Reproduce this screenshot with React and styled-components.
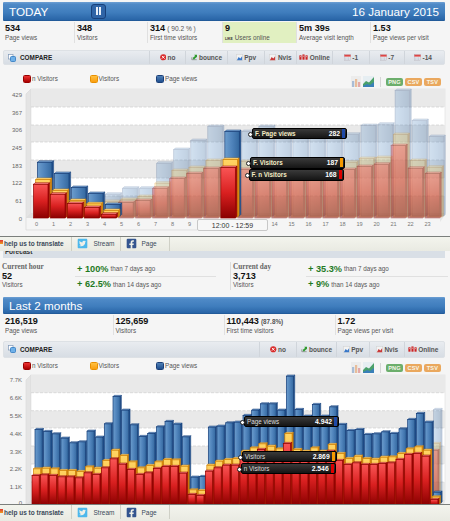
import React from "react";
import styled, { createGlobalStyle } from "styled-components";
import { FaTwitterSquare, FaFacebookSquare } from "react-icons/fa";

const GlobalStyle = createGlobalStyle`
  html, body { margin: 0; padding: 0; background: #f5f5f5; }
  body { font-family: "Liberation Sans", Arial, sans-serif; color: #222; }
`;

const Page = styled.div`
  width: 450px;
  height: 521px;
  overflow: hidden;
  padding-top: 1.5px;
  box-sizing: border-box;
`;

const TitleBar = styled.div`
  height: ${(p) => p.$h}px;
  margin: ${(p) => p.$mt || 0}px 5px 0 3px;
  padding: 0 6px;
  display: flex;
  align-items: center;
  justify-content: space-between;
  box-sizing: border-box;
  color: #fff;
  font-size: 11.7px;
  background: linear-gradient(#6d9fd3 0, #4f8ac7 12%, #3f7dbd 55%, #2a66a8 92%, #1d5592 100%);
  border-radius: 1px;
`;

const TitleLeft = styled.div`
  display: flex;
  align-items: center;
  gap: 43px;
`;

const PauseButton = styled.div`
  width: 14.5px;
  height: 14.5px;
  box-sizing: border-box;
  display: flex;
  gap: 1.5px;
  align-items: center;
  justify-content: center;
  border: 1px solid #17407a;
  border-radius: 3px;
  background: #2f64a6;
  i {
    width: 2.2px;
    height: 8px;
    background: #e8eff8;
  }
`;

const StatsRow = styled.div`
  display: grid;
  grid-template-columns: ${(p) => p.$cols};
  height: ${(p) => p.$h}px;
  margin: 1px 5px 0 3px;
`;

const Stat = styled.div`
  box-sizing: border-box;
  padding: 1px 2px 0 2px;
  border-right: 1px solid #e0e0e0;
  background: ${(p) => (p.$green ? "#e1f0c1" : "transparent")};
  &:last-child { border-right: 0; }
`;

const StatValue = styled.div`
  font-size: 9.1px;
  line-height: 11px;
  font-weight: bold;
  color: #111;
  small {
    font-size: 6.6px;
    font-weight: normal;
    color: #555;
    margin-left: 2px;
  }
  b {
    font-size: 6.4px;
    color: #555;
    margin-left: 2px;
  }
`;

const StatLabel = styled.div`
  font-size: 6.3px;
  line-height: 8px;
  color: #555;
  white-space: nowrap;
`;

const LikeTag = styled.span`
  font-size: 3.4px;
  font-weight: bold;
  color: #333;
  margin-right: 2px;
`;

const CompareBar = styled.div`
  height: ${(p) => p.$h}px;
  margin: ${(p) => p.$mt}px 5px 0 3px;
  display: flex;
  align-items: center;
  box-sizing: border-box;
  padding-right: 3px;
  border: 1px solid #dde1e5;
  border-radius: 2px;
  background: linear-gradient(#e9ecf0, #d7dde4);
`;

const CompareTitle = styled.div`
  flex: 1;
  display: flex;
  align-items: center;
  gap: 4px;
  padding-left: 4px;
  font-size: 6.4px;
  font-weight: bold;
  color: #222;
`;

const CompareButton = styled.div`
  width: ${(p) => p.$w}px;
  height: 100%;
  box-sizing: border-box;
  display: flex;
  align-items: center;
  justify-content: center;
  gap: 1.5px;
  border-left: 1px solid #d0d5db;
  font-size: 6.5px;
  font-weight: bold;
  color: #555;
  white-space: nowrap;
`;

const ChartHead = styled.div`
  height: ${(p) => p.$h}px;
  padding: ${(p) => p.$pad}px 9px 0 23px;
  box-sizing: border-box;
  display: flex;
  justify-content: space-between;
  align-items: flex-start;
`;

const Legend = styled.div`
  display: flex;
`;

const LegendItem = styled.div`
  width: 66.5px;
  display: flex;
  align-items: center;
  gap: 1px;
  font-size: 6.3px;
  line-height: 8px;
  color: #555;
`;

const Swatch = styled.i`
  width: 8px;
  height: 8px;
  border-radius: 1.5px;
  border: 0.5px solid ${(p) => p.$line};
  box-sizing: border-box;
  background: ${(p) => p.$fill};
`;

const Tools = styled.div`
  display: flex;
  align-items: center;
  gap: 2px;
  margin-top: ${(p) => p.$mt || 0}px;
`;

const ToolDivider = styled.i`
  width: 1px;
  height: 10px;
  margin: 0 3px 0 4px;
  background: #d5d5d5;
`;

const ExportBadge = styled.span`
  width: 17px;
  height: 8px;
  border-radius: 2px;
  display: flex;
  align-items: center;
  justify-content: center;
  font-size: 5.6px;
  font-weight: bold;
  letter-spacing: 0.2px;
  color: #f7f7ea;
  background: ${(p) => p.$color};
`;

const Plot = styled.div`
  position: relative;
  height: ${(p) => p.$h}px;
  svg { display: block; }
`;

const Tip = styled.div`
  position: absolute;
  left: ${(p) => p.$x}px;
  top: ${(p) => p.$y}px;
  width: 95px;
  height: 11.5px;
  box-sizing: border-box;
  padding: 0 1px 0 2px;
  display: flex;
  align-items: center;
  border-radius: 2px;
  background: linear-gradient(#3a3a3a, #151515);
  border: 0.5px solid #000;
  color: ${(p) => (p.$strong ? "#f4ecc4" : "#ddd")};
  font-size: 6.3px;
  font-weight: ${(p) => (p.$strong ? "bold" : "normal")};
  &::before {
    content: "";
    position: absolute;
    left: -5px;
    top: 3px;
    width: 3px;
    height: 3px;
    border-radius: 50%;
    background: #fff;
    border: 1px solid #222;
  }
`;

const TipLabel = styled.span`
  flex: 1;
  white-space: nowrap;
`;

const TipValue = styled.b`
  font-size: 6.8px;
  color: #fff;
  margin-right: 2px;
`;

const TipMark = styled.i`
  width: 3px;
  height: 9px;
  background: ${(p) => p.$color};
`;

const Footer = styled.div`
  height: ${(p) => p.$h}px;
  box-sizing: border-box;
  position: relative;
  display: flex;
  border-top: 1.5px solid #7b7f7c;
  background: linear-gradient(#f3f4ed, #e9eae2);
  font-size: 6.5px;
  color: #3a4a5a;
`;

const FooterItem = styled.div`
  width: ${(p) => p.$w}px;
  height: 14px;
  box-sizing: border-box;
  display: flex;
  align-items: center;
  gap: ${(p) => p.$gap || 0}px;
  padding-left: ${(p) => p.$pad || 0}px;
  border-right: 1px solid #cfd0c6;
  font-weight: ${(p) => (p.$strong ? "bold" : "normal")};
  white-space: nowrap;
`;

const FlagCrumb = styled.i`
  width: 2.5px;
  height: 4px;
  margin-right: 1.5px;
  margin-top: -3px;
  background: linear-gradient(#d33, #f0a020);
`;

const ForecastStrip = styled.div`
  height: 7px;
  margin: 0 5px 0 3px;
  padding-left: 2px;
  overflow: hidden;
  background: #d9dfe6;
  font-size: 6.6px;
  font-weight: bold;
  line-height: 7px;
  color: #333;
  span {
    display: block;
    margin-top: -3.5px;
  }
`;

const ForecastRow = styled.div`
  display: grid;
  grid-template-columns: 230px 220px;
  height: 39px;
`;

const ForecastBlock = styled.div`
  display: grid;
  grid-template-columns: ${(p) => p.$cols};
  padding-top: 4px;
  box-sizing: border-box;
  position: relative;
`;

const ForecastInfo = styled.div`
  padding: 1px 0 0 ${(p) => p.$pad}px;
  ${(p) => p.$rule && "border-left: 1px solid #dcdcdc; margin: 0 0 7px 0;"}
`;

const InfoTitle = styled.div`
  font-family: "Liberation Serif", "Times New Roman", serif;
  font-size: 7.2px;
  font-weight: bold;
  line-height: 8px;
  color: #666;
`;

const InfoValue = styled.div`
  font-size: 9.1px;
  font-weight: bold;
  line-height: 10px;
  color: #111;
`;

const Changes = styled.div`
  display: flex;
  flex-direction: column;
  margin-right: ${(p) => p.$mr}px;
`;

const ChangeRow = styled.div`
  height: ${(p) => p.$h}px;
  display: flex;
  align-items: center;
  gap: 2px;
  padding-left: 2px;
  font-size: 6.3px;
  color: #555;
  white-space: nowrap;
  &:first-child { border-bottom: 1px solid #e0e0e0; }
`;

const Gain = styled.b`
  font-size: 9.2px;
  color: #1f7a1f;
`;

// page icons
const CompareIcon = () => (
  <svg width="8" height="8" viewBox="0 0 8 8">
    <rect x="0.5" y="0.5" width="4.5" height="4.5" fill="#fff" stroke="#7f98b8" strokeWidth="0.7" />
    <rect x="2.5" y="2.5" width="5" height="5" rx="1" fill="#6fb0e8" stroke="#2d78c0" strokeWidth="0.8" />
  </svg>
);

const NoIcon = () => (
  <svg width="6.5" height="6.5" viewBox="0 0 8 8">
    <circle cx="4" cy="4" r="3.8" fill="#d92b2b" />
    <path d="M2.3 2.3l3.4 3.4M5.7 2.3L2.3 5.7" stroke="#fff" strokeWidth="1.1" />
  </svg>
);

const BounceIcon = () => (
  <svg width="6.5" height="6.5" viewBox="0 0 8 8">
    <path d="M1 4V7H7" fill="none" stroke="#666" strokeWidth="0.7" />
    <path d="M2 5L5 2.5 4 1H8V5L6.8 3.8 3.5 7Z" fill="#2f9a2f" />
  </svg>
);

const TrendIcon = ({ color }) => (
  <svg width="7" height="7" viewBox="0 0 8 8">
    <rect x="0.3" y="0.3" width="7.4" height="7.4" rx="1" fill="#f2f2f2" stroke="#bbb" strokeWidth="0.5" />
    <path d="M1 7L3 3.5 5 5 7 2.5V7Z" fill={color} />
  </svg>
);

const OnlineIcon = () => (
  <svg width="9" height="7" viewBox="0 0 10 8">
    <rect x="0.3" y="1.5" width="2.4" height="5" fill="#c22" />
    <rect x="3.8" y="0.5" width="2.4" height="6" fill="#c22" />
    <rect x="7.3" y="1.5" width="2.4" height="5" fill="#c22" />
    <path d="M1 3h1M4.5 2.5h1M8 3h1" stroke="#fff" strokeWidth="0.7" />
  </svg>
);

const CalendarIcon = () => (
  <svg width="7" height="7" viewBox="0 0 8 8">
    <rect x="0.4" y="0.8" width="7.2" height="6.8" fill="#f4f4f4" stroke="#a9a9b5" strokeWidth="0.5" />
    <rect x="0.4" y="0.8" width="7.2" height="2.2" fill="#d44" />
    <path d="M1.5 4.5h5M1.5 6h5" stroke="#8b9bb8" strokeWidth="0.8" strokeDasharray="1 0.5" />
  </svg>
);

const ColumnsTool = () => (
  <svg width="10" height="11" viewBox="0 0 10 11">
    <rect width="10" height="11" fill="#ececec" />
    <rect x="1" y="5" width="2.2" height="6" fill="#a9bdd6" />
    <rect x="4" y="3" width="2.2" height="8" fill="#e8bd9a" />
    <rect x="7" y="6" width="2.2" height="5" fill="#e3a9a9" />
  </svg>
);

const AreaTool = () => (
  <svg width="11" height="11" viewBox="0 0 11 11">
    <rect width="11" height="11" fill="#e6eef2" />
    <path d="M0 8L3 5 6 6.5 11 1V11H0Z" fill="#4aa06a" />
    <path d="M0 10L4 8 7 9 11 6V11H0Z" fill="#3a80b8" />
  </svg>
);

// chart
const palette = {
  blue: { fill: "blue", line: "#133c78", top: "#7ba3cf", side: "#2a5c96" },
  orange: { fill: "orange", line: "#d68300", top: "#ffe08a", side: "#d98a10" },
  red: { fill: "red", line: "#8f0000", top: "#ff8a8a", side: "#a00808" },
};

const Bar = ({ x, w, h, floor, d, kind, id }) => {
  if (!h) return null;
  const c = palette[kind];
  const top = floor - h;
  return (
    <g>
      <polygon
        points={`${x},${top + d} ${x + d},${top} ${x + w + d},${top} ${x + w},${top + d}`}
        fill={c.top}
        stroke={c.line}
        strokeWidth="0.5"
      />
      <polygon
        points={`${x + w},${top + d} ${x + w + d},${top} ${x + w + d},${floor - d} ${x + w},${floor}`}
        fill={c.side}
        stroke={c.line}
        strokeWidth="0.5"
      />
      <rect x={x} y={top + d} width={w} height={h - d} fill={`url(#${id}-${c.fill})`} stroke={c.line} strokeWidth="0.7" />
    </g>
  );
};

const Series = ({ data, conf, id, fade }) => (
  <g>
    {[
      ["blue", conf.blueOff, 2],
      ["orange", conf.orangeOff, 1],
      ["red", 0, 0],
    ].map(([kind, off, lift]) => (
      <g key={kind} opacity={fade ? fade[kind] : 1}>
        {data[kind].map((h, i) => (
          <Bar
            key={i}
            id={id}
            kind={kind}
            x={conf.startX + conf.step * i + off}
            w={conf.barW}
            h={h ? Math.max(h - lift, 0) : 0}
            floor={conf.floor - lift}
            d={conf.depth}
          />
        ))}
      </g>
    ))}
  </g>
);

const ghostFade = { blue: 0.3, orange: 0.32, red: 0.42 };

const Chart = ({ id, conf, solid, ghost, children }) => {
  const { y0, height, wallTop, floor, grid, yLabels, xLabels } = conf;
  const back = floor - 5;
  return (
    <Plot $h={height}>
      <svg width="450" height={height} viewBox={`0 ${y0} 450 ${height}`}>
        <defs>
          <linearGradient id={`${id}-blue`} x1="0" x2="1" y1="0" y2="0">
            <stop offset="0" stopColor="#6c9dcd" />
            <stop offset="0.5" stopColor="#4f83bb" />
            <stop offset="1" stopColor="#34689f" />
          </linearGradient>
          <linearGradient id={`${id}-orange`} x1="0" x2="0" y1="0" y2="1">
            <stop offset="0" stopColor="#ffd463" />
            <stop offset="1" stopColor="#f8ae2a" />
          </linearGradient>
          <linearGradient id={`${id}-red`} x1="0" x2="0" y1="0" y2="1">
            <stop offset="0" stopColor="#f95555" />
            <stop offset="0.5" stopColor="#d92020" />
            <stop offset="1" stopColor="#8a0000" />
          </linearGradient>
        </defs>

        <polygon points={`26,${wallTop + 5} 31,${wallTop} 31,${back} 26,${floor}`} fill="#e4e4e4" stroke="#d8d8d8" strokeWidth="0.6" />
        <rect x="31" y={wallTop} width="414" height={back - wallTop} fill="#fff" stroke="#dcdcdc" strokeWidth="0.6" />
        {grid.map((y, i) =>
          i % 2 === 0 ? (
            <rect key={y} x="31" y={y} width="414" height={(grid[i + 1] || back) - y} fill="#e9e9e9" />
          ) : null
        )}
        {grid.slice(1).map((y) => (
          <line key={y} x1="31" x2="445" y1={y} y2={y} stroke="#cfcfcf" strokeWidth="0.7" strokeDasharray="3 1.5" />
        ))}
        <polygon points={`26,${floor} 31,${back} 445,${back} 440,${floor}`} fill="#dedede" />
        <polygon points={`440,${floor} 445,${back} 445,${back + 2} 440,${floor + 4}`} fill="#e6e6e6" />

        {yLabels.map(([text, y]) => (
          <text key={text} x="22" y={y + 2} textAnchor="end" fontSize="6" fill="#666" fontFamily="Liberation Sans">
            {text}
          </text>
        ))}

        {ghost && <Series data={ghost} conf={conf} id={id} fade={ghostFade} />}
        <Series data={solid} conf={conf} id={id} />

        {xLabels && (
          <g>
            <path d={`M26 ${floor}V230H197`} fill="none" stroke="#d8d8d8" strokeWidth="0.7" />
            {xLabels.map(([text, x]) => (
              <text key={text} x={x} y="226" textAnchor="middle" fontSize="5.6" fill="#777" fontFamily="Liberation Sans">
                {text}
              </text>
            ))}
            <rect x="197.5" y="219.5" width="70" height="11" rx="1.5" fill="#f7f7f7" stroke="#b5b5b5" strokeWidth="0.7" />
            <text x="232.5" y="227.5" textAnchor="middle" fontSize="7" fill="#333" fontFamily="Liberation Sans">
              12:00 - 12:59
            </text>
          </g>
        )}
      </svg>
      {children}
    </Plot>
  );
};

const blank = (n) => Array(n).fill(0);

const todayConf = {
  y0: 87,
  height: 148.5,
  wallTop: 89,
  floor: 218,
  grid: [89, 107, 125, 142, 160, 178, 196],
  startX: 33.5,
  step: 17.03,
  barW: 14.5,
  depth: 1.6,
  blueOff: 4,
  orangeOff: 2.2,
  yLabels: [["429", 95], ["367", 113], ["306", 130], ["245", 148], ["183", 166], ["122", 183], ["61", 201], ["0", 218.5]],
  xLabels: [0, 1, 2, 3, 4, 5, 6, 7, 8, 9, 14, 15, 16, 17, 18, 19, 20, 21, 22, 23].map((n) => [String(n), 36.6 + 17 * n]),
};

const todaySolid = {
  red: [35.3, 25.3, 16, 12, 5.3, ...blank(6), 52, ...blank(12)],
  orange: [40, 29, 19, 15.7, 9, ...blank(6), 60, ...blank(12)],
  blue: [57.3, 46, 32, 26, 15, ...blank(6), 88, ...blank(12)],
};

const todayGhost = {
  red: [...blank(5), 17, 19, 31.3, 41, 46, 51, 0, 50, 50, 50, 50, 50, 50, 50, 53, 55.3, 74, 51.3, 46],
  orange: [...blank(4), 18, 20, 23, 36.3, 49, 52, 59, 0, 58, 58, 58, 58, 58, 58, 57.3, 61, 62, 85, 59, 52.3],
  blue: [...blank(4), 25.3, 31.3, 31.3, 56.3, 70, 79, 93, 0, 88, 93, 88, 88, 88, 88, 85.3, 94, 95.3, 129, 99, 83],
};

const monthsConf = {
  y0: 370,
  height: 134.5,
  wallTop: 375,
  floor: 505,
  grid: [375, 392.7, 410.7, 428, 446, 464, 482],
  startX: 32,
  step: 8.667,
  barW: 7.2,
  depth: 1.2,
  blueOff: 3,
  orangeOff: 1.5,
  yLabels: [["7.7K", 380], ["6.6K", 398], ["5.5K", 416], ["4.4K", 434], ["3.3K", 451.7], ["2.2K", 469], ["1.1K", 487], ["0", 503]],
};

// tops as read off the graph, in thirds of a pixel below y 365
const toHeight = (tops) => tops.map((t) => 140 - t / 3);

const monthsSolid = {
  red: toHeight([
    328, 326, 328, 332, 332, 335, 320, 325, 305, 278, 294, 310, 325, 320, 307, 301, 301, 321, 385, 388, 315, 305,
    297, 297, 272, 262, 250, 258, 265, 232, 268, 272, 262, 272, 255, 283, 295, 290, 295, 295, 292, 290, 280, 265, 262, 270, 400,
  ]),
  orange: toHeight([
    308, 306, 308, 313, 313, 316, 302, 306, 283, 252, 268, 287, 305, 298, 287, 280, 281, 300, 371, 373, 297, 285,
    280, 277, 255, 245, 233, 240, 248, 202, 250, 255, 245, 255, 235, 262, 277, 270, 277, 279, 273, 272, 262, 248, 242, 252, 392,
  ]),
  blue: toHeight([
    190, 196, 203, 216, 230, 227, 195, 213, 173, 91, 132, 176, 211, 202, 182, 166, 174, 212, 333, 331, 183, 180,
    170, 168, 148, 132, 113, 113, 132, 30, 130, 150, 115, 150, 122, 175, 193, 190, 205, 203, 197, 202, 188, 160, 142, 168, 378,
  ]),
};

const monthsGhost = {
  red: [...blank(46), 140 - 253 / 3],
  orange: [...blank(46), 140 - 232 / 3],
  blue: [...blank(46), 140 - 130 / 3],
};

const compareToday = [
  { w: 36, icon: <NoIcon />, text: "no" },
  { w: 42, icon: <BounceIcon />, text: "bounce" },
  { w: 37, icon: <TrendIcon color="#3a78c8" />, text: "Ppv" },
  { w: 32, icon: <TrendIcon color="#c83a3a" />, text: "Nvis" },
  { w: 36, icon: <OnlineIcon />, text: "Online" },
  { w: 37, icon: <CalendarIcon />, text: "-1" },
  { w: 35, icon: <CalendarIcon />, text: "-7" },
  { w: 37, icon: <CalendarIcon />, text: "-14" },
];

const compareMonths = [
  { w: 37, icon: <NoIcon />, text: "no" },
  { w: 40, icon: <BounceIcon />, text: "bounce" },
  { w: 33, icon: <TrendIcon color="#3a78c8" />, text: "Ppv" },
  { w: 35, icon: <TrendIcon color="#c83a3a" />, text: "Nvis" },
  { w: 37, icon: <OnlineIcon />, text: "Online" },
];

const Compare = ({ items, h, mt }) => (
  <CompareBar $h={h} $mt={mt}>
    <CompareTitle>
      <CompareIcon />
      COMPARE
    </CompareTitle>
    {items.map((b) => (
      <CompareButton key={b.text} $w={b.w}>
        {b.icon}
        {b.text}
      </CompareButton>
    ))}
  </CompareBar>
);

const Head = ({ h, pad, toolsUp }) => (
  <ChartHead $h={h} $pad={pad}>
    <Legend>
      <LegendItem>
        <Swatch $fill="linear-gradient(#ee3333,#a80000)" $line="#900" />n Visitors
      </LegendItem>
      <LegendItem>
        <Swatch $fill="linear-gradient(#ffc040,#fa9e10)" $line="#e89000" />Visitors
      </LegendItem>
      <LegendItem>
        <Swatch $fill="linear-gradient(#4f7fb5,#1f4f8f)" $line="#1b3f78" />Page views
      </LegendItem>
    </Legend>
    <Tools $mt={toolsUp}>
      <ColumnsTool />
      <AreaTool />
      <ToolDivider />
      <ExportBadge $color="#6cae6c">PNG</ExportBadge>
      <ExportBadge $color="#eaa85e">CSV</ExportBadge>
      <ExportBadge $color="#eaa85e">TSV</ExportBadge>
    </Tools>
  </ChartHead>
);

const BottomBar = ({ h }) => (
  <Footer $h={h}>
    <FooterItem $w={71.5} $strong>
      <FlagCrumb />
      help us to translate
    </FooterItem>
    <FooterItem $w={49} $pad={5} $gap={6}>
      <FaTwitterSquare size={11} color="#4db8ec" />
      Stream
    </FooterItem>
    <FooterItem $w={49} $pad={5} $gap={5}>
      <FaFacebookSquare size={11} color="#34558f" />
      Page
    </FooterItem>
  </Footer>
);

const TipRow = ({ x, y, label, value, color, strong }) => (
  <Tip $x={x} $y={y} $strong={strong}>
    <TipLabel>{label}</TipLabel>
    <TipValue>{value}</TipValue>
    <TipMark $color={color} />
  </Tip>
);

export default function App() {
  return (
    <>
      <GlobalStyle />
      <Page>
        <TitleBar $h={19.5}>
          <TitleLeft>
            TODAY
            <PauseButton>
              <i />
              <i />
            </PauseButton>
          </TitleLeft>
          <span>16 January 2015</span>
        </TitleBar>
        <StatsRow $cols="72px 73px 75px 74px 74px 74px" $h={21}>
          <Stat>
            <StatValue>534</StatValue>
            <StatLabel>Page views</StatLabel>
          </Stat>
          <Stat>
            <StatValue>348</StatValue>
            <StatLabel>Visitors</StatLabel>
          </Stat>
          <Stat>
            <StatValue>
              314<small>( 90.2 % )</small>
            </StatValue>
            <StatLabel>First time visitors</StatLabel>
          </Stat>
          <Stat $green>
            <StatValue>9</StatValue>
            <StatLabel>
              <LikeTag>LIKE</LikeTag>Users online
            </StatLabel>
          </Stat>
          <Stat>
            <StatValue>5m 39s</StatValue>
            <StatLabel>Average visit length</StatLabel>
          </Stat>
          <Stat>
            <StatValue>1.53</StatValue>
            <StatLabel>Page views per visit</StatLabel>
          </Stat>
        </StatsRow>
        <Compare items={compareToday} h={15} mt={7} />
        <Head h={22} pad={10} toolsUp={1} />
        <Chart id="today" conf={todayConf} solid={todaySolid} ghost={todayGhost}>
          <TipRow x={252} y={40.5} label="F. Page views" value="282" color="#1f4aa8" strong />
          <TipRow x={250} y={70} label="F. Visitors" value="187" color="#f59a00" strong />
          <TipRow x={248.5} y={82} label="F. n Visitors" value="168" color="#d00" strong />
        </Chart>
        <BottomBar h={15.5} />

        <ForecastStrip>
          <span>Forecast</span>
        </ForecastStrip>
        <ForecastRow>
          <ForecastBlock $cols="75px 1fr">
            <ForecastInfo $pad={2}>
              <InfoTitle>Current hour</InfoTitle>
              <InfoValue>52</InfoValue>
              <StatLabel>Visitors</StatLabel>
            </ForecastInfo>
            <Changes $mr={14}>
              <ChangeRow $h={13.5}>
                <Gain>+ 100%</Gain> than 7 days ago
              </ChangeRow>
              <ChangeRow $h={15}>
                <Gain>+ 62.5%</Gain> than 14 days ago
              </ChangeRow>
            </Changes>
          </ForecastBlock>
          <ForecastBlock $cols="76px 1fr">
            <ForecastInfo $pad={2} $rule>
              <InfoTitle>Current day</InfoTitle>
              <InfoValue>3,713</InfoValue>
              <StatLabel>Visitors</StatLabel>
            </ForecastInfo>
            <Changes $mr={2}>
              <ChangeRow $h={13.5}>
                <Gain>+ 35.3%</Gain> than 7 days ago
              </ChangeRow>
              <ChangeRow $h={15}>
                <Gain>+ 9%</Gain> than 14 days ago
              </ChangeRow>
            </Changes>
          </ForecastBlock>
        </ForecastRow>

        <TitleBar $h={17}>Last 2 months</TitleBar>
        <StatsRow $cols="110.5px 111px 111px 110.5px" $h={20}>
          <Stat>
            <StatValue>216,519</StatValue>
            <StatLabel>Page views</StatLabel>
          </Stat>
          <Stat>
            <StatValue>125,659</StatValue>
            <StatLabel>Visitors</StatLabel>
          </Stat>
          <Stat>
            <StatValue>
              110,443<b>(87.8%)</b>
            </StatValue>
            <StatLabel>First time visitors</StatLabel>
          </Stat>
          <Stat>
            <StatValue>1.72</StatValue>
            <StatLabel>Page views per visit</StatLabel>
          </Stat>
        </StatsRow>
        <Compare items={compareMonths} h={16.7} mt={6} />
        <Head h={12.3} pad={4.5} />
        <Chart id="months" conf={monthsConf} solid={monthsSolid} ghost={monthsGhost}>
          <TipRow x={244} y={45.7} label="Page views" value="4.942" color="#1f4aa8" />
          <TipRow x={241.7} y={80.7} label="Visitors" value="2.869" color="#f59a00" />
          <TipRow x={240.7} y={93} label="n Visitors" value="2.546" color="#d00" />
        </Chart>
        <BottomBar h={17} />
      </Page>
    </>
  );
}
